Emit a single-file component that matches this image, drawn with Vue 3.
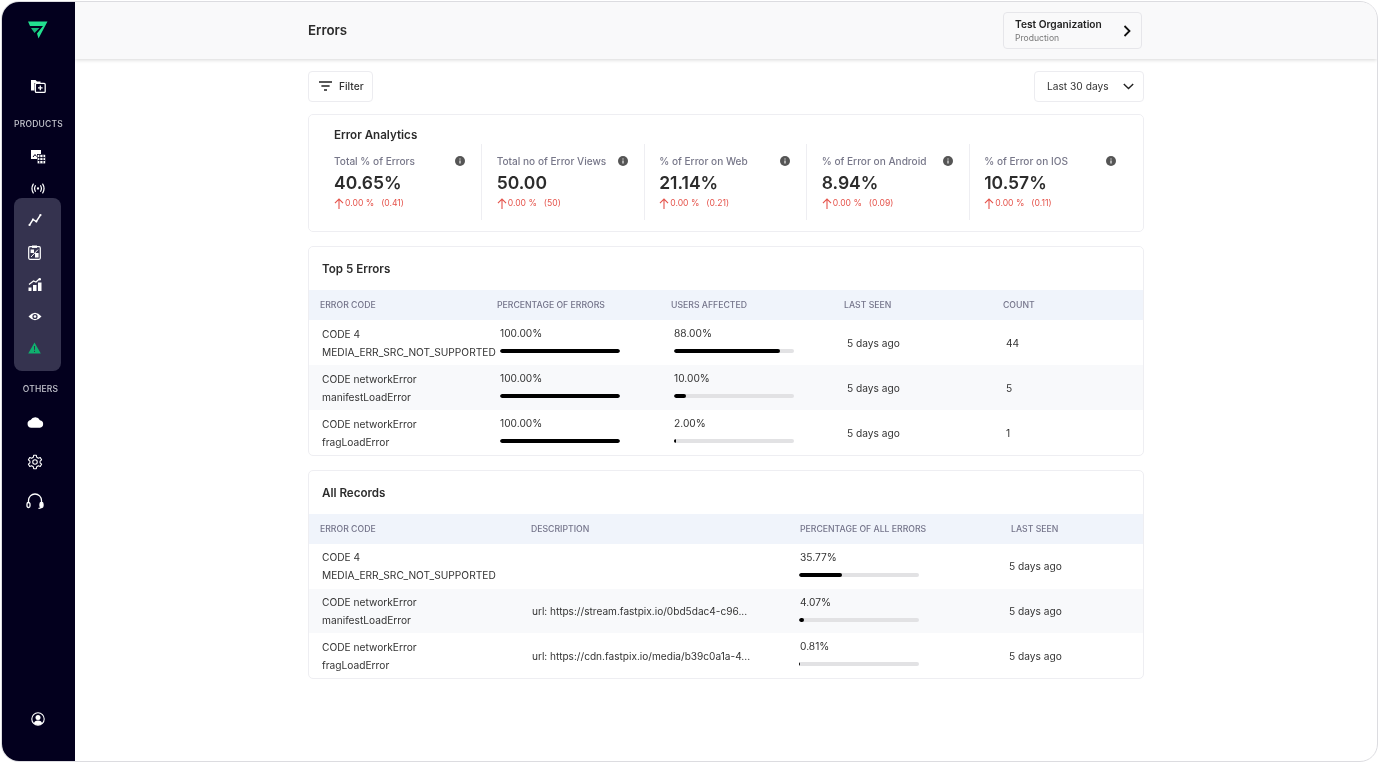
<script setup>
const stats = [
  { label: 'Total % of Errors', value: '40.65%', change: '0.00 %', delta: '(0.41)' },
  { label: 'Total no of Error Views', value: '50.00', change: '0.00 %', delta: '(50)' },
  { label: '% of Error on Web', value: '21.14%', change: '0.00 %', delta: '(0.21)' },
  { label: '% of Error on Android', value: '8.94%', change: '0.00 %', delta: '(0.09)' },
  { label: '% of Error on IOS', value: '10.57%', change: '0.00 %', delta: '(0.11)' }
]
const topErrors = [
  { code: 'CODE 4', name: 'MEDIA_ERR_SRC_NOT_SUPPORTED', pct: 100, users: 88, seen: '5 days ago', count: 44 },
  { code: 'CODE networkError', name: 'manifestLoadError', pct: 100, users: 10, seen: '5 days ago', count: 5 },
  { code: 'CODE networkError', name: 'fragLoadError', pct: 100, users: 2, seen: '5 days ago', count: 1 }
]
const records = [
  { code: 'CODE 4', name: 'MEDIA_ERR_SRC_NOT_SUPPORTED', desc: '', pct: 35.77, seen: '5 days ago' },
  { code: 'CODE networkError', name: 'manifestLoadError', desc: 'url: https://stream.fastpix.io/0bd5dac4-c96...', pct: 4.07, seen: '5 days ago' },
  { code: 'CODE networkError', name: 'fragLoadError', desc: 'url: https://cdn.fastpix.io/media/b39c0a1a-4...', pct: 0.81, seen: '5 days ago' }
]
</script>

<template>
  <div class="frame">
    <aside class="side">
      <div class="logo">
        <svg width="20" height="18" viewBox="0 0 20 18">
          <path d="M0 .5 H19.5 L10.5 17.5 L9 12.5 L15 5 H2 Z" fill="#22e08f" />
          <path d="M3 7 H11.5 L6.5 12 Z" fill="#14b877" />
        </svg>
      </div>
      <div class="item first">
        <svg width="16" height="16" viewBox="0 0 16 16" fill="none" stroke="#fff" stroke-width="1.3">
          <path d="M1 2 H5.5 L7 3.6 H10.5 V5 H4.5 V12.5 H1 Z" fill="#fff" stroke="none" />
          <rect x="5.4" y="5.4" width="9.8" height="9" rx="1" />
          <path d="M10.3 7.6 V12.2 M8 9.9 H12.6" />
        </svg>
      </div>
      <div class="label products">PRODUCTS</div>
      <div class="item after-label">
        <svg width="16" height="15" viewBox="0 0 16 15" fill="none">
          <path d="M1 1 H11 V5 H7 V10 H1 Z" fill="#fff" />
          <path d="M3 8 L5 5.5 L6.5 7.5" stroke="#03001e" stroke-width="1" />
          <rect x="7.6" y="5.8" width="7.6" height="8.6" fill="#fff" />
          <path d="M9.8 5.8 V14.4 M13 5.8 V14.4 M7.6 8.6 H15.2 M7.6 11.5 H15.2" stroke="#03001e" stroke-width=".9" />
        </svg>
      </div>
      <div class="item tight">
        <svg width="14" height="11" viewBox="0 0 16 12" fill="none" stroke="#fff" stroke-width="1.4" stroke-linecap="round">
          <circle cx="8" cy="6" r="1.3" fill="#fff" stroke="none" />
          <path d="M5 2.8 Q3.2 6 5 9.2 M11 2.8 Q12.8 6 11 9.2 M2.6 1 Q-.4 6 2.6 11 M13.4 1 Q16.4 6 13.4 11" />
        </svg>
      </div>
      <div class="group">
        <div class="item">
          <svg width="14" height="14" viewBox="0 0 14 14" fill="none" stroke="#fff" stroke-width="1.4">
            <path d="M1.5 12 L5 6.5 L8.3 8.5 L12.5 2" />
            <circle cx="1.5" cy="12" r="1.1" fill="#fff" stroke="none" />
            <circle cx="5" cy="6.5" r="1.1" fill="#fff" stroke="none" />
            <circle cx="8.3" cy="8.5" r="1.1" fill="#fff" stroke="none" />
            <circle cx="12.5" cy="2" r="1.1" fill="#fff" stroke="none" />
          </svg>
        </div>
        <div class="item">
          <svg width="13" height="15" viewBox="0 0 13 15" fill="none">
            <rect x=".7" y="1.7" width="11.6" height="12.6" rx="1.2" stroke="#fff" stroke-width="1.2" />
            <rect x="4" y=".5" width="5" height="2.4" fill="#fff" />
            <path d="M2.6 4.6 H6 V8 H2.6 Z M7 8 H10.6 V12.4 H7 Z" fill="#fff" />
            <path d="M3 12 L10 4.6" stroke="#fff" stroke-width="1" />
          </svg>
        </div>
        <div class="item">
          <svg width="14" height="13" viewBox="0 0 14 13" fill="#fff">
            <path d="M.5 9.5 H3.5 V13 H.5 Z M5 7 H8.5 V13 H5 Z M10 4.5 H13.5 V13 H10 Z" />
            <path d="M1 6.5 L5.5 3 L8 4 L11.5 .8" fill="none" stroke="#fff" stroke-width="1.2" />
            <circle cx="11.8" cy="1.2" r="1.2" />
          </svg>
        </div>
        <div class="item">
          <svg width="14" height="11" viewBox="0 0 14 10" fill="none">
            <path d="M.5 5 Q7 -2.4 13.5 5 Q7 12.4 .5 5 Z" fill="#fff" />
            <circle cx="7" cy="5" r="2.6" fill="#35334f" />
            <circle cx="7" cy="5" r="1.3" fill="#fff" />
          </svg>
        </div>
        <div class="item">
          <svg width="13" height="12" viewBox="0 0 13 12">
            <path d="M6.5 .5 L12.8 11.5 H.2 Z" fill="#0fb06e" />
            <path d="M6.5 4 V7.8 M6.5 8.8 V10" stroke="#35334f" stroke-width="1" />
          </svg>
        </div>
      </div>
      <div class="label others">OTHERS</div>
      <div class="item other top">
        <svg width="17" height="14" viewBox="0 0 16 13">
          <path d="M4 11 A3.7 3.7 0 0 1 3.4 3.7 A5 5 0 0 1 12.2 3.9 A3.6 3.6 0 0 1 12.2 11 Z" fill="#fff" />
        </svg>
      </div>
      <div class="item other">
        <svg width="16" height="16" viewBox="0 0 24 24" fill="none" stroke="#fff" stroke-width="1.6" stroke-linejoin="round">
          <circle cx="12" cy="12" r="3.4" />
          <path d="M10 2 H14 L14.6 5 L17 6.3 L19.9 5.3 L21.9 8.8 L19.6 10.8 V13.2 L21.9 15.2 L19.9 18.7 L17 17.7 L14.6 19 L14 22 H10 L9.4 19 L7 17.7 L4.1 18.7 L2.1 15.2 L4.4 13.2 V10.8 L2.1 8.8 L4.1 5.3 L7 6.3 L9.4 5 Z" />
        </svg>
      </div>
      <div class="item other">
        <svg width="18" height="16" viewBox="0 0 18 16" fill="none" stroke="#fff" stroke-width="1.3">
          <path d="M2.5 10 V7.5 A6.5 6.5 0 0 1 15.5 7.5 V10" />
          <rect x="1" y="9.5" width="3" height="5" rx="1.5" />
          <rect x="14" y="9.5" width="3" height="5" rx="1.5" fill="#fff" />
          <path d="M15.5 14 Q15 15.4 12.5 15.3" />
        </svg>
      </div>
      <div class="item user">
        <svg width="14" height="14" viewBox="0 0 14 14">
          <circle cx="7" cy="7" r="6.2" fill="none" stroke="#fff" stroke-width="1.1" />
          <circle cx="7" cy="5.4" r="2.5" fill="#fff" />
          <path d="M2.8 11.6 Q3.4 8.6 7 8.6 Q10.6 8.6 11.2 11.6 Q7 14.6 2.8 11.6 Z" fill="#fff" />
        </svg>
      </div>
    </aside>

    <div class="main">
      <header class="top-bar">
        <div class="bar-inner">
          <h1 class="title">Errors</h1>
          <div class="org">
            <div>
              <div class="org-name">Test Organization</div>
              <div class="org-env">Production</div>
            </div>
            <svg width="8" height="12" viewBox="0 0 8 12" fill="none" stroke="#111" stroke-width="1.8">
              <path d="M1.5 1 L6.5 6 L1.5 11" />
            </svg>
          </div>
        </div>
      </header>

      <div class="content">
        <div class="controls">
          <button class="btn filter">
            <svg width="13" height="10" viewBox="0 0 13 10" fill="none" stroke="#222" stroke-width="1.4">
              <path d="M0 1 H13 M2.4 5 H10.6 M5 9 H8" />
            </svg>
            Filter
          </button>
          <button class="btn range">
            Last 30 days
            <svg width="11" height="7" viewBox="0 0 11 7" fill="none" stroke="#222" stroke-width="1.4">
              <path d="M.8 1 L5.5 5.6 L10.2 1" />
            </svg>
          </button>
        </div>

        <section class="card analytics">
          <h2 class="analytics-title">Error Analytics</h2>
          <div class="stats">
            <div v-for="s in stats" :key="s.label" class="stat">
              <div class="stat-head">
                <span class="stat-label">{{ s.label }}</span>
                <svg class="info" width="10" height="10" viewBox="0 0 10 10">
                  <circle cx="5" cy="5" r="5" fill="#555" />
                  <path d="M5 4.4 V7.6 M5 2.4 V3.4" stroke="#fff" stroke-width="1.1" />
                </svg>
              </div>
              <div class="stat-value">{{ s.value }}</div>
              <div class="stat-change">
                <svg width="10" height="11" viewBox="0 0 9 10" fill="none" stroke="#e5534b" stroke-width="1">
                  <path d="M4.5 10 V1 M.8 4.6 L4.5 1 L8.2 4.6" />
                </svg>
                <span class="pct">{{ s.change }}</span>
                <span>{{ s.delta }}</span>
              </div>
            </div>
          </div>
        </section>

        <section class="card table-card top-card">
          <h2 class="card-title">Top 5 Errors</h2>
          <div class="row head top-cols">
            <span>ERROR CODE</span><span>PERCENTAGE OF ERRORS</span><span>USERS AFFECTED</span><span>LAST SEEN</span><span>COUNT</span>
          </div>
          <div v-for="r in topErrors" :key="r.name" class="row body top-cols">
            <div class="code"><div>{{ r.code }}</div><div>{{ r.name }}</div></div>
            <div class="metric">
              <div>{{ r.pct.toFixed(2) }}%</div>
              <div class="track"><div class="fill" :style="{ width: r.pct + '%' }"></div></div>
            </div>
            <div class="metric">
              <div>{{ r.users.toFixed(2) }}%</div>
              <div class="track"><div class="fill" :style="{ width: r.users + '%' }"></div></div>
            </div>
            <div class="plain">{{ r.seen }}</div>
            <div class="plain">{{ r.count }}</div>
          </div>
        </section>

        <section class="card table-card">
          <h2 class="card-title">All Records</h2>
          <div class="row head rec-cols">
            <span>ERROR CODE</span><span>DESCRIPTION</span><span>PERCENTAGE OF ALL ERRORS</span><span>LAST SEEN</span>
          </div>
          <div v-for="r in records" :key="r.name" class="row body rec-cols">
            <div class="code"><div>{{ r.code }}</div><div>{{ r.name }}</div></div>
            <div class="desc">{{ r.desc }}</div>
            <div class="metric rec-metric">
              <div>{{ r.pct.toFixed(2) }}%</div>
              <div class="track"><div class="fill" :style="{ width: r.pct + '%' }"></div></div>
            </div>
            <div class="seen">{{ r.seen }}</div>
          </div>
        </section>
      </div>
    </div>
  </div>
</template>

<style>
html, body { margin: 0; background: #fff; }
</style>

<style scoped>
* { box-sizing: border-box; }
.frame {
  position: fixed;
  inset: 1px 1px 2px 1px;
  display: flex;
  border: 1px solid #dcdce0;
  border-radius: 18px;
  overflow: hidden;
  font-family: Inter, "Liberation Sans", sans-serif;
  color: #2c2c2c;
  background: #fff;
}
.side {
  width: 73px;
  flex: none;
  background: #03001e;
  display: flex;
  flex-direction: column;
  color: #c6c6cf;
}
.logo { height: 55px; display: flex; align-items: center; justify-content: center; padding-right: 1px; }
.item { height: 32px; display: flex; align-items: center; justify-content: center; padding-right: 2px; }
.first { margin-top: 13px; }
.label { font-size: 8.5px; line-height: 14px; font-weight: 500; text-align: center; letter-spacing: .2px; }
.products { margin-top: 15px; }
.after-label { margin-top: 9px; }
.tight { height: 19px; margin-top: 7px; }
.group {
  margin: 0 14px 0 12px;
  padding: 6px 4px 7px 0;
  background: #35334f;
  border-radius: 8px;
}
.others { margin-top: 11px; padding-left: 4px; }
.other { height: 39px; padding-right: 7px; }
.top { margin-top: 7px; }
.user { margin-top: auto; margin-bottom: 26px; padding-right: 1px; }

.main { flex: 1; min-width: 0; display: flex; flex-direction: column; }
.top-bar {
  height: 57px;
  flex: none;
  background: #f9f9fa;
  box-shadow: 0 1px 4px rgba(0, 0, 0, .16);
}
.bar-inner {
  width: 836px;
  height: 100%;
  margin: 0 auto;
  display: flex;
  align-items: center;
  justify-content: space-between;
  padding-right: 2px;
}
.title { margin: 0; font-size: 13.3px; font-weight: 600; color: #2c2c2c; position: relative; top: -1px; }
.org {
  width: 139px;
  height: 37px;
  padding: 0 10px 0 11px;
  display: flex;
  align-items: center;
  justify-content: space-between;
  border: 1px solid #e6e6ea;
  border-radius: 4px;
}
.org-name { font-size: 10.2px; font-weight: 600; line-height: 14px; color: #222; }
.org-env { font-size: 8.6px; line-height: 14px; color: #777; }

.content { width: 836px; margin: 0 auto; padding-top: 12px; }
.controls { display: flex; justify-content: space-between; height: 31px; margin-bottom: 12px; }
.btn {
  height: 31px;
  display: flex;
  align-items: center;
  background: #fff;
  border: 1px solid #ececf0;
  border-radius: 4px;
  font: 500 10.2px Inter, "Liberation Sans", sans-serif;
  color: #333;
  padding: 0 0 1px;
}
.filter { width: 65px; padding-left: 10px; gap: 7px; }
.range { width: 110px; padding-left: 12px; gap: 14px; font-weight: 400; }

.card { background: #fff; border: 1px solid #eeeef2; border-radius: 5px; overflow: hidden; }
.analytics { height: 118px; padding: 13px 0 0 25px; margin-bottom: 14px; }
.analytics-title { margin: 0; font-size: 11.6px; line-height: 15px; font-weight: 600; color: #2c2c2c; }
.stats { display: grid; grid-template-columns: 148px repeat(4, 162.5px); margin-top: 1px; }
.stat { height: 76px; padding: 10px 16px 0 14.7px; border-right: 1px solid #eeeef2; }
.stat:first-child { padding-left: 0; }
.stat:last-child { border-right: 0; }
.stat-head { display: flex; justify-content: space-between; align-items: center; height: 14px; }
.stat-label { font-size: 10.1px; font-weight: 500; color: #777789; white-space: nowrap; }
.stat-value { font-size: 17.5px; line-height: 26px; font-weight: 600; margin-top: 2px; color: #2c2c2c; }
.stat-change { display: flex; align-items: center; font-size: 8.6px; line-height: 14px; color: #e5534b; }
.pct { margin: 0 7px 0 1px; }

.table-card { margin-bottom: 14px; }
.card-title { margin: 0; height: 43px; padding: 13.5px 0 0 13px; font-size: 11.6px; line-height: 16px; font-weight: 600; color: #2c2c2c; }
.row { display: grid; padding-left: 11px; }
.top-cols { grid-template-columns: 177px 174px 173px 159px 1fr; }
.rec-cols { grid-template-columns: 211px 269px 211px 1fr; }
.head {
  height: 30px;
  align-items: center;
  background: #f0f4fb;
  font-size: 8.7px;
  font-weight: 500;
  color: #74748a;
}
.body { height: 44.7px; font-size: 10.2px; line-height: 18px; color: #333; align-items: center; }
.top-card .body { height: 45px; }
.body:nth-child(even) { background: #f8f9fb; }
.code { padding-left: 2px; white-space: nowrap; }
.metric { padding-left: 3px; align-self: start; padding-top: 4px; }
.rec-metric { padding-left: 0; }
.rec-metric .track { margin-left: -1px; }
.track { width: 120px; height: 4px; margin-top: 7px; background: #e2e2e4; border-radius: 2px; overflow: hidden; }
.fill { height: 100%; background: #000; border-radius: 2px; }
.plain { padding-left: 3px; }
.desc { padding-left: 1px; white-space: nowrap; font-size: 10.1px; }
.seen { margin-left: -2px; }
</style>
